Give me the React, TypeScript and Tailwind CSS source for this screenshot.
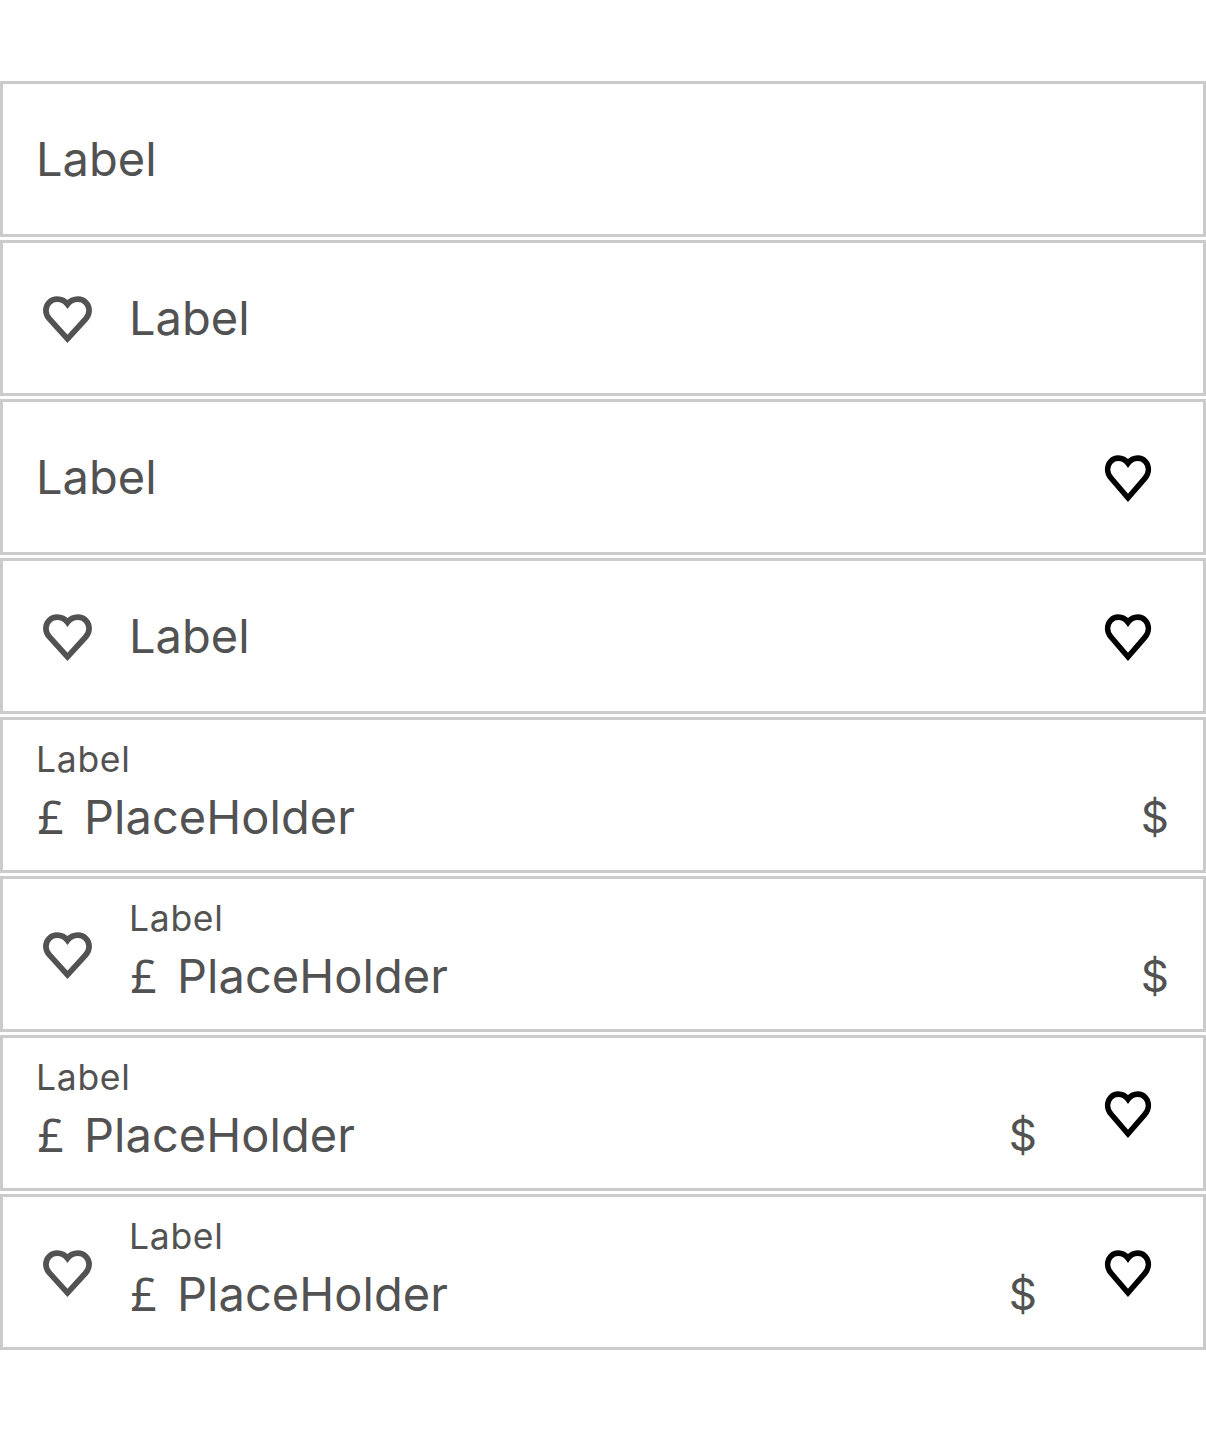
import React from "react";

function Heart({ className }: { className: string }) {
  return (
    <svg
      viewBox="0 0 55 53"
      preserveAspectRatio="none"
      className={className}
      fill="none"
      stroke="currentColor"
      strokeWidth={5.7}
      strokeMiterlimit={10}
      aria-hidden="true"
    >
      <path d="M27.5 45.8L9.6 26.2C7.2 23.6 5.9 21 5.9 17.5C5.9 11.1 10.8 6.1 17.2 6.1C21.3 6.1 25 8 27.5 11.3C30 8 33.7 6.1 37.8 6.1C44.2 6.1 49.1 11.1 49.1 17.5C49.1 21 47.8 23.6 45.4 26.2Z" />
    </svg>
  );
}

interface FieldProps {
  leading?: boolean;
  trailing?: boolean;
  filled?: boolean;
}

function Field({ leading, trailing, filled }: FieldProps) {
  return (
    <div className="flex h-[156px] border-3 border-[#cbcbcb] pr-[33px] pl-[33px] text-[#525252]">
      {leading && <Heart className="mt-[50px] mr-[34px] ml-1 h-[53px] w-[55px] shrink-0" />}
      {filled ? (
        <div className="flex min-w-0 flex-1 flex-col pt-[18px]">
          <div className="h-[44px] text-[35.5px] leading-[44px] font-[370] tracking-[0.7px]">Label</div>
          <div className="mt-[5px] flex h-[60px] text-[47px] leading-[60px] font-[370]">
            <span className="w-[48px] pl-[1.5px] font-['Noto_Sans',sans-serif] text-[46px] leading-[58px]">£</span>
            <span className="flex-1 tracking-[0.05px]">PlaceHolder</span>
            <span className="mr-px text-[44px] leading-[61px]">$</span>
          </div>
        </div>
      ) : (
        <div className="flex-1 pt-[45px] text-[47px] leading-[60px] font-[370]">Label</div>
      )}
      {trailing && <Heart className="mt-[50px] mr-[16px] ml-[64px] h-[53px] w-[52px] shrink-0 text-black" />}
    </div>
  );
}

const fields: FieldProps[] = [
  {},
  { leading: true },
  { trailing: true },
  { leading: true, trailing: true },
  { filled: true },
  { filled: true, leading: true },
  { filled: true, trailing: true },
  { filled: true, leading: true, trailing: true },
];

export default function App() {
  return (
    <main className="flex min-h-screen flex-col gap-[3px] bg-white pt-[81px] font-['Inter',sans-serif]">
      {fields.map((field, i) => (
        <Field key={i} {...field} />
      ))}
    </main>
  );
}
